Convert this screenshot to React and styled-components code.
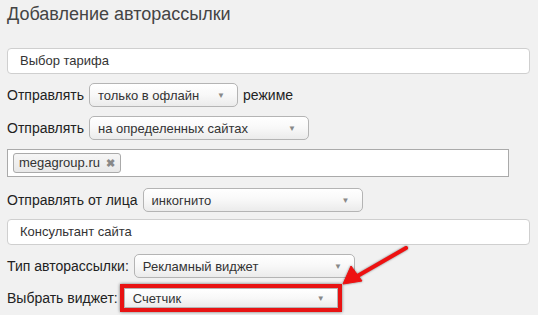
import React from 'react';
import styled, {createGlobalStyle} from 'styled-components';

const GlobalStyle = createGlobalStyle`
    html, body {
        margin: 0;
        background: #f1f1f1;
    }
    body {
        font-family: Arial, "Liberation Sans", sans-serif;
        color: #222;
    }
`

function Select({width, value}) {
    return (
        <SelectBox width={width}>
            <span>{value}</span>
            <Caret>▼</Caret>
        </SelectBox>
    )
}

function App() {
    return (
        <Page>
            <GlobalStyle/>
            <Title>Добавление авторассылки</Title>
            <TextInput>Выбор тарифа</TextInput>
            <Row>
                <Label>Отправлять</Label>
                <Select width={149} value='только в офлайн'/>
                <Label>режиме</Label>
            </Row>
            <Row>
                <Label>Отправлять</Label>
                <Select width={220} value='на определенных сайтах'/>
            </Row>
            <TagBox>
                <Tag>megagroup.ru <b>✖</b></Tag>
            </TagBox>
            <Row top={11}>
                <Label>Отправлять от лица</Label>
                <Select width={220} value='инкогнито'/>
            </Row>
            <TextInput top={7}>Консультант сайта</TextInput>
            <Row>
                <Label>Тип авторассылки:</Label>
                <Select width={221} value='Рекламный виджет'/>
            </Row>
            <Row top={6}>
                <Label gap={2}>Выбрать виджет:</Label>
                <Highlight>
                    <Select width={214} value='Счетчик'/>
                </Highlight>
            </Row>
            <Pointer width="80" height="50" viewBox="0 0 80 50">
                <line x1="66" y1="4" x2="14" y2="34" stroke="#ee1111" strokeWidth="4" strokeLinecap="round"/>
                <polygon points="3,40 11,22 22,37" fill="#ee1111" stroke="#ee1111" strokeWidth="1" strokeLinejoin="round"/>
            </Pointer>
        </Page>
    )
}

const Page = styled.div`
    position: relative;
    padding: 0 8px 0 7px;
    width: 538px;
    height: 315px;
    overflow: hidden;
    box-sizing: border-box;
    display: flex;
    flex-direction: column;
    align-items: flex-start;
`
const Title = styled.h1`
    margin: 3px 0 0 0;
    font-size: 18px;
    font-weight: normal;
    color: #444;
    line-height: 22px;
    height: 43px;
`
const TextInput = styled.div`
    align-self: stretch;
    margin-top: ${p => (p.top !== undefined ? p.top : 2)}px;
    height: 26px;
    box-sizing: border-box;
    border: 1px solid #cfcfcf;
    border-radius: 4px;
    background: #fff;
    padding: 0 12px;
    font-size: 13px;
    line-height: 24px;
    color: #333;
`
const Row = styled.div`
    display: flex;
    align-items: center;
    margin-top: ${p => (p.top !== undefined ? p.top : 9)}px;
    font-size: 14px;
`
const Label = styled.span`
    margin-right: ${p => (p.gap !== undefined ? p.gap : 5)}px;
    color: #222;
    white-space: nowrap;
`
const SelectBox = styled.div`
    width: ${p => p.width}px;
    height: 24px;
    box-sizing: border-box;
    border: 1px solid #b4b4b4;
    border-radius: 5px;
    background: linear-gradient(to bottom, #ffffff 0%, #f8f8f8 50%, #ebebeb 100%);
    display: flex;
    align-items: center;
    justify-content: space-between;
    padding: 0 12px 0 8px;
    margin-right: 5px;
    font-size: 13px;
    color: #333;
`
const Caret = styled.span`
    font-size: 8px;
    color: #888;
`
const TagBox = styled.div`
    width: 502px;
    height: 28px;
    margin-top: 9px;
    box-sizing: border-box;
    border: 1px solid #aaa;
    background: #fff;
    padding: 3px 5px;
`
const Tag = styled.div`
    display: inline-block;
    height: 20px;
    box-sizing: border-box;
    padding: 0 5px;
    border: 1px solid #aaa;
    border-radius: 3px;
    background: linear-gradient(to bottom, #f6f6f6, #e8e8e8);
    font-size: 13px;
    line-height: 18px;
    color: #333;

    b {
        color: #888;
        font-size: 11px;
        margin-left: 2px;
    }
`
const Highlight = styled.div`
    border: 4px solid #e81313;
    box-shadow: 0 0 3px rgba(0, 0, 0, 0.55);
    display: flex;

    & > div {
        border-radius: 0;
        margin-right: 0;
        height: 20px;
    }
`
const Pointer = styled.svg`
    position: absolute;
    left: 340px;
    top: 244px;
    filter: drop-shadow(0 0 1px rgba(0, 0, 0, 0.5));
`

export default App;
